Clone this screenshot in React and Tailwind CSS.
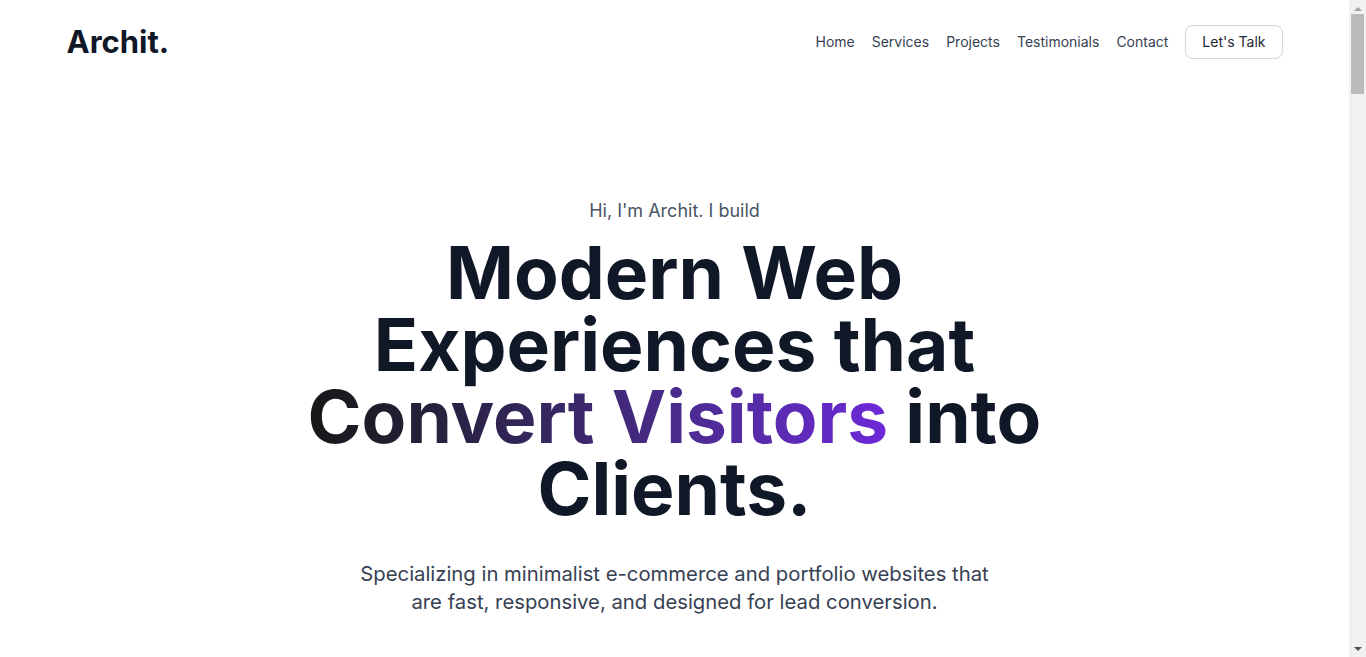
export default function App() {
  const font = { fontFamily: "Inter, 'Noto Sans', sans-serif" };
  return (
    <div className="bg-white text-gray-900 pr-[17px]" style={font}>
      <div className="min-h-[5100px]">
        <header className="max-w-7xl mx-auto px-8 h-[84px] flex items-center justify-between">
          <div className="text-[31px] font-bold text-gray-900">Archit.</div>
          <nav className="flex items-center gap-[17px] text-sm text-gray-700">
            <a>Home</a>
            <a>Services</a>
            <a>Projects</a>
            <a>Testimonials</a>
            <a>Contact</a>
            <button className="h-[34px] px-4 rounded-lg border border-gray-300 text-sm text-gray-800 bg-white">
              Let's Talk
            </button>
          </nav>
        </header>
        <section className="pt-[113px] flex flex-col items-center text-center px-8">
          <p className="text-lg text-gray-600">Hi, I'm Archit. I build</p>
          <h1 className="mt-3 max-w-[880px] text-[73px] font-bold leading-[72px] text-gray-900">
            Modern Web Experiences that{" "}
            <span className="bg-gradient-to-r from-[#171717] to-[#6d28d9] bg-clip-text text-transparent">
              Convert Visitors
            </span>{" "}
            into Clients.
          </h1>
          <p className="mt-[35px] max-w-[660px] text-[20.3px] leading-7 text-gray-700">
            Specializing in minimalist e-commerce and portfolio websites that are fast, responsive, and designed for lead conversion.
          </p>
        </section>
      </div>
      <div className="fixed top-0 right-0 h-screen w-[17px] bg-[#f1f1f1] flex flex-col items-center">
        <div className="h-[17px] flex items-center justify-center">
          <div className="w-0 h-0 border-l-[4px] border-r-[4px] border-b-[4px] border-l-transparent border-r-transparent border-b-[#a3a3a3]" />
        </div>
        <div className="mt-[-3px] w-[13px] h-[80px] bg-[#bcbcbc]" />
        <div className="flex-1" />
        <div className="h-[17px] flex items-center justify-center">
          <div className="w-0 h-0 border-l-[4px] border-r-[4px] border-t-[4px] border-l-transparent border-r-transparent border-t-[#505050]" />
        </div>
      </div>
    </div>
  );
}
